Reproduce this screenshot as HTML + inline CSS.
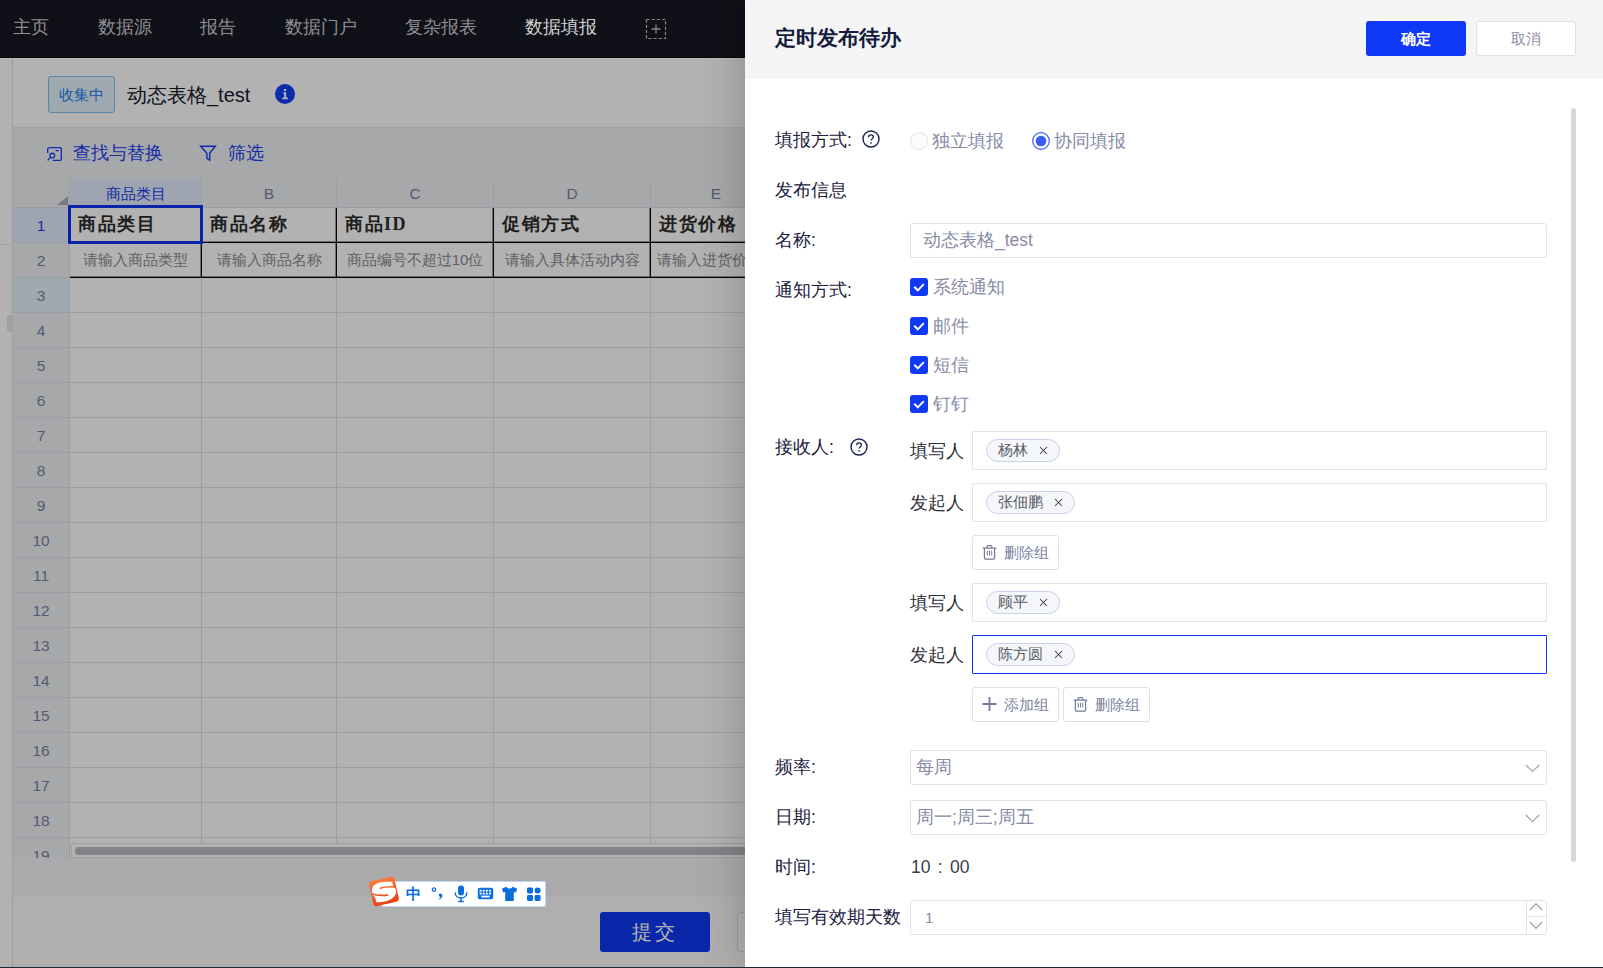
<!DOCTYPE html>
<html lang="zh">
<head>
<meta charset="utf-8">
<title>定时发布待办</title>
<style>
*{box-sizing:border-box;margin:0;padding:0}
html,body{width:1603px;height:968px;overflow:hidden;background:#fafafa;font-family:"Liberation Sans",sans-serif;}
.abs{position:absolute}
#page{position:absolute;left:0;top:0;width:1603px;height:968px;overflow:hidden;background:#fff}
/* nav */
#nav{position:absolute;left:0;top:0;width:1603px;height:58px;background:#101118;border-bottom:1px solid #06070c;box-shadow:0 1px 0 rgba(255,255,255,.14)}
#nav span{position:absolute;top:0;height:55px;line-height:55px;font-size:17.5px;color:#8f8f93;white-space:nowrap}
#nav span.on{color:#d2d2d2}
/* header */
#hdr{position:absolute;left:13px;top:58px;width:1590px;height:70px;background:#fff;border-bottom:1px solid #e6e7ee}
#vline{position:absolute;left:12px;top:58px;width:1px;height:910px;background:#e2e2e6}
#hline{position:absolute;left:0;top:244px;width:12px;height:1px;background:#ebebf2}
#handle{position:absolute;left:7px;top:315px;width:6px;height:17px;border-radius:3px 0 0 3px;background:#e6e6e6}
#badge{position:absolute;left:48px;top:76px;width:67px;height:37px;border:1px solid #7fc0f5;border-radius:3px;background:#e3f3fd;color:#2a7df0;font-size:15px;line-height:35px;text-align:center;white-space:nowrap}
#title{position:absolute;left:127px;top:80px;height:30px;line-height:30px;font-size:20px;color:#15192c;white-space:nowrap}
#info{position:absolute;left:275px;top:84px;width:20px;height:20px}
/* toolbar */
#tb{position:absolute;left:13px;top:128px;width:1590px;height:50px;background:#f0f1f4}
#tb .t{position:absolute;top:13px;height:25px;line-height:25px;font-size:17.5px;color:#1c3fee;white-space:nowrap}
/* sheet */
#sheet{position:absolute;left:13px;top:178px;width:1590px;height:680px;background:#fff;overflow:hidden}
#colh{position:absolute;left:0;top:0;width:1590px;height:30px;background:#f0f1f4;border-bottom:1px solid #e0e1ea}
#colh div{position:absolute;top:0;height:29px;line-height:31px;text-align:center;font-size:15.5px;color:#7a82a6;border-right:1px solid #e3e4ee}
#rowh{position:absolute;left:0;top:30px;width:57px;height:660px;background:#f0f1f4;border-right:1px solid #e0e1ea}
#rowh div{position:absolute;left:0;width:56px;height:35px;line-height:35px;text-align:center;font-size:15.5px;color:#7a82a6;border-bottom:1px solid #e1e2ec}
.vl{position:absolute;top:30px;width:1px;height:660px;background:#e1e2ea}
.hl{position:absolute;left:57px;width:1540px;height:1px;background:#e1e2ea}
.c1{position:absolute;top:30px;height:35px;line-height:33px;font-family:"Liberation Sans",sans-serif;font-weight:bold;font-size:18px;letter-spacing:1.5px;color:#2c2c2c;padding-left:8px;border-right:1px solid #0a0a0a;border-bottom:1px solid #000;box-shadow:inset -1px -1px 0 rgba(0,0,0,.38);white-space:nowrap;overflow:hidden}
.c2{position:absolute;top:65px;height:35px;line-height:33px;font-size:15px;color:#8b8b91;text-align:center;border-right:1px solid #0a0a0a;border-bottom:1px solid #000;box-shadow:inset -1px -1px 0 rgba(0,0,0,.38);white-space:nowrap;overflow:hidden}
#sel{position:absolute;left:55px;top:27px;width:135px;height:39px;border:3px solid #0c33f0}
#hsb{position:absolute;left:58px;top:665px;width:1540px;height:15px;background:#fff;border:1px solid #e2e3ec}
#hsb i{position:absolute;left:3px;top:3px;width:1500px;height:8px;border-radius:4px;background:#bbbcc0}
#below{position:absolute;left:13px;top:858px;width:1590px;height:39px;background:#f4f4f6}
#foot{position:absolute;left:13px;top:897px;width:1590px;height:71px;background:#fbfbfb}
#submit{position:absolute;left:600px;top:912px;width:110px;height:40px;border-radius:3px;background:#1139f3;color:#fff;font-family:"Liberation Sans",sans-serif;font-size:20px;letter-spacing:3px;text-align:center;line-height:40px;white-space:nowrap}
#btn2{position:absolute;left:737px;top:912px;width:110px;height:40px;border-radius:3px;background:#fff;border:1px solid #dcdfe6}
#mask{position:absolute;left:0;top:0;width:1603px;height:968px;background:rgba(0,0,0,.3)}
#botline{position:absolute;left:0;top:967px;width:1603px;height:1px;background:#1b2a38}

/* drawer */
#drawer{position:absolute;left:745px;top:0;width:858px;height:967px;background:#fff;box-shadow:-4px 0 40px rgba(0,0,0,.2)}
#dh{position:absolute;left:0;top:0;width:858px;height:78px;background:#f5f5f5;border-bottom:1px solid #efefef}
#dt{position:absolute;left:30px;top:23px;height:30px;line-height:30px;font-size:21px;font-weight:bold;color:#141b3d;white-space:nowrap}
#ok{position:absolute;left:621px;top:21px;width:100px;height:35px;border-radius:3px;background:#1039f7;color:#fff;font-size:15px;line-height:35px;text-align:center;font-weight:600}
#cancel{position:absolute;left:731px;top:21px;width:100px;height:35px;border-radius:3px;background:#fff;border:1px solid #dcdfe6;color:#8a8ea6;font-size:15px;line-height:33px;text-align:center}
#vsb{position:absolute;left:826px;top:108px;width:5px;height:754px;border-radius:3px;background:#d8d8d8}
.lb{position:absolute;left:30px;height:24px;line-height:24px;font-size:17.5px;color:#1b2140;white-space:nowrap}
.sub{position:absolute;left:165px;height:24px;line-height:24px;font-size:17.5px;color:#2e3038;white-space:nowrap}
.val{position:absolute;height:24px;line-height:24px;font-size:17.5px;color:#878ba6;white-space:nowrap}
.inp{position:absolute;left:165px;width:637px;height:35px;border:1px solid #e0e1ec;border-radius:3px;background:#fff}
.box{position:absolute;left:227px;width:575px;height:39px;border:1px solid #e0e1ec;border-radius:1px;background:#fff}
.box.focus{border:1.5px solid #1039f7}
.tag{position:absolute;left:13px;top:7px;height:23px;border:1px solid #c9d1ea;border-radius:12px;background:#f4f6fa;color:#585c66;font-size:15px;line-height:20px;padding:0 0 0 11px;white-space:nowrap}
.tag svg{position:absolute;right:11px;top:6px}
.gbtn{position:absolute;width:87px;height:35px;border:1px solid #dcdfe6;border-radius:3px;background:#fff;color:#7c81a0;font-size:15px;line-height:33px;white-space:nowrap}
.gbtn span{position:absolute;left:31px;top:0}
.gbtn svg{position:absolute;left:9px;top:8px}
.cb{position:absolute;left:165px;width:18px;height:18px;border-radius:3px;background:#1039f5}
.cb svg{position:absolute;left:0;top:0}
.help{position:absolute;width:18px;height:18px}

#ime{position:absolute;left:367px;top:876px;width:180px;height:32px}
#imebar{position:absolute;left:14px;top:5px;width:165px;height:26px;background:#fff;border:1px solid #bcd6f5;border-radius:2px}
#ime .zh{position:absolute;left:39px;top:8px;font-size:15px;line-height:20px;font-weight:bold;color:#0a6edb}
</style>
</head>
<body>
<div id="page">
  <div id="vline"></div><div id="hline"></div><div id="handle"></div>
  <div id="hdr"></div>
  <div id="badge">收集中</div>
  <div id="title">动态表格_test</div>
  <svg id="info" viewBox="0 0 20 20"><circle cx="10" cy="10" r="10" fill="#1340f5"/><rect x="8.900" y="5" width="2.200" height="2" fill="#fff"/><path d="M8.100 8.300h3v5.300h1.800v1.600H7.300v-1.600h1.800V9.800H8.100z" fill="#fff"/></svg>
  <div id="tb">
    <svg class="abs" style="left:33px;top:18px" width="17" height="17" viewBox="0 0 17 17" fill="none" stroke="#1c3fee" stroke-width="1.35"><path d="M1.7 7V3.100a1.500 1.500 0 0 1 1.500-1.500h10.600a1.500 1.500 0 0 1 1.500 1.500v9.800a1.500 1.500 0 0 1-1.500 1.500H6.800"/><circle cx="6.300" cy="9.500" r="2.300"/><path d="M4.600 11.200L1.600 14.400M9.600 4.600h3.200"/></svg>
    <div class="t" style="left:60px">查找与替换</div>
    <svg class="abs" style="left:186px;top:16px" width="18" height="18" viewBox="0 0 18 18" fill="none" stroke="#1c3fee" stroke-width="1.45" stroke-linejoin="miter"><path d="M1.700 2.200h14.600l-5.600 7v7l-2.800-1.800V9.200z"/></svg>
    <div class="t" style="left:215px">筛选</div>
  </div>
  <div id="sheet">
    <div id="colh">
      <div style="left:0;width:57px"><svg class="abs" style="left:44px;top:18px" width="11" height="9" viewBox="0 0 11 9"><path d="M11 0v9H0z" fill="#abaebe"/></svg></div>
      <div style="left:57px;width:132px;background:#e4ebfe;color:#1c3fee;font-size:15px">商品类目</div>
      <div style="left:189px;width:135px">B</div>
      <div style="left:324px;width:157px">C</div>
      <div style="left:481px;width:157px">D</div>
      <div style="left:638px;width:131px">E</div>
      <div style="left:769px;width:131px">F</div>
    </div>
    <div id="rowh">
      <div style="top:0;background:#e4ebfe;color:#1c3fee">1</div>
      <div style="top:35px">2</div>
      <div style="top:70px;background:#e4f4fb">3</div>
      <div style="top:105px">4</div>
      <div style="top:140px">5</div>
      <div style="top:175px">6</div>
      <div style="top:210px">7</div>
      <div style="top:245px">8</div>
      <div style="top:280px">9</div>
      <div style="top:315px">10</div>
      <div style="top:350px">11</div>
      <div style="top:385px">12</div>
      <div style="top:420px">13</div>
      <div style="top:455px">14</div>
      <div style="top:490px">15</div>
      <div style="top:525px">16</div>
      <div style="top:560px">17</div>
      <div style="top:595px">18</div>
      <div style="top:630px">19</div>
    </div>
    <div class="vl" style="left:188px"></div><div class="vl" style="left:323px"></div><div class="vl" style="left:480px"></div><div class="vl" style="left:637px"></div><div class="vl" style="left:768px"></div>
    <div class="hl" style="top:134px"></div><div class="hl" style="top:169px"></div><div class="hl" style="top:204px"></div><div class="hl" style="top:239px"></div><div class="hl" style="top:274px"></div><div class="hl" style="top:309px"></div><div class="hl" style="top:344px"></div><div class="hl" style="top:379px"></div><div class="hl" style="top:414px"></div><div class="hl" style="top:449px"></div><div class="hl" style="top:484px"></div><div class="hl" style="top:519px"></div><div class="hl" style="top:554px"></div><div class="hl" style="top:589px"></div><div class="hl" style="top:624px"></div><div class="hl" style="top:659px"></div>
    <div class="c1" style="left:57px;width:132px">商品类目</div>
    <div class="c1" style="left:189px;width:135px">商品名称</div>
    <div class="c1" style="left:324px;width:157px">商品<span style="font-family:'Liberation Serif',serif">ID</span></div>
    <div class="c1" style="left:481px;width:157px">促销方式</div>
    <div class="c1" style="left:638px;width:131px">进货价格</div>
    <div class="c2" style="left:57px;width:132px">请输入商品类型</div>
    <div class="c2" style="left:189px;width:135px">请输入商品名称</div>
    <div class="c2" style="left:324px;width:157px">商品编号不超过10位</div>
    <div class="c2" style="left:481px;width:157px">请输入具体活动内容</div>
    <div class="c2" style="left:638px;width:131px;text-align:left;padding-left:6px">请输入进货价格</div>
    <div id="sel"></div>
    <div id="hsb"><i></i></div>
  </div>
  <div id="below"></div>
  <div id="foot"></div>
  <div id="submit">提交</div>
  <div id="btn2"></div>
  <div id="mask"></div>
  <div id="nav">
    <span style="left:13px">主页</span>
    <span style="left:98px">数据源</span>
    <span style="left:200px">报告</span>
    <span style="left:285px">数据门户</span>
    <span style="left:405px">复杂报表</span>
    <span class="on" style="left:525px">数据填报</span>
    <svg class="abs" style="left:645px;top:18px" width="22" height="22" viewBox="0 0 22 22"><rect x="1.5" y="1.5" width="19" height="19" fill="none" stroke="#85868a" stroke-width="1.2" stroke-dasharray="3.2 2"/><path d="M6.5 11h9M11 6.5v9" stroke="#85868a" stroke-width="1.3" fill="none"/></svg>
  </div>
</div>

<div id="ime">
  <div id="imebar"></div>
  <svg class="abs" style="left:0;top:0" width="34" height="32" viewBox="0 0 34 32"><defs><linearGradient id="lg" x1="0" y1="0" x2="0.15" y2="1"><stop offset="0" stop-color="#f9803f"/><stop offset="1" stop-color="#ec4310"/></linearGradient></defs><rect x="-13" y="-12.800" width="26" height="25.600" rx="3.200" fill="url(#lg)" transform="translate(16.900 15.400) rotate(-13)"/><mask id="sm"><path d="M25.300 5.800L26.200 10.400C28.500 11.500 29.500 14.500 29 17C28.300 20.500 25 23.500 20 25C17 26 13 26.300 9.500 26.200L8 21.500C5.500 19.500 4.600 16.500 5 13C5.600 9.500 9 7 14 6.200C18 5.600 22 5.600 25.300 5.800Z" fill="#fff"/><path d="M13.400 12.200C17 10.800 22 10.500 29 10.900M3.500 17.500C9 19.400 16 19.600 20.600 19.100" fill="none" stroke="#000" stroke-width="1.700" stroke-linecap="round"/></mask><rect x="0" y="0" width="34" height="32" fill="#fff" mask="url(#sm)"/></svg>
  <div class="zh">中</div>
  <svg class="abs" style="left:64px;top:9px" width="14" height="16" viewBox="0 0 14 16"><circle cx="3" cy="4.600" r="1.700" fill="none" stroke="#0a6edb" stroke-width="1.300"/><path d="M9.200 8.600c1.400 0 2.200 1 2.200 2.200 0 1.800-1.400 3.200-3 3.800l-.4-.8c.9-.5 1.500-1.100 1.600-2-.9 0-1.700-.6-1.700-1.600s.6-1.600 1.300-1.600z" fill="#0a6edb"/></svg>
  <svg class="abs" style="left:87px;top:9px" width="14" height="18" viewBox="0 0 14 18"><rect x="4" y="0.500" width="6" height="10" rx="3" fill="#0a6edb"/><path d="M1.200 7.500c0 3.400 2.500 5.600 5.800 5.600s5.800-2.200 5.800-5.600" fill="none" stroke="#0a6edb" stroke-width="1.500"/><path d="M7 13v3M4.200 16.400h5.600" stroke="#0a6edb" stroke-width="1.500"/></svg>
  <svg class="abs" style="left:110px;top:11px" width="17" height="14" viewBox="0 0 17 14"><rect x="0.800" y="0.800" width="15.400" height="11.400" rx="1.800" fill="#0a6edb"/><g fill="#fff"><rect x="2.600" y="2.800" width="2" height="1.800"/><rect x="5.700" y="2.800" width="2" height="1.800"/><rect x="8.800" y="2.800" width="2" height="1.800"/><rect x="11.900" y="2.800" width="2" height="1.800"/><rect x="2.600" y="5.700" width="2" height="1.800"/><rect x="5.700" y="5.700" width="2" height="1.800"/><rect x="8.800" y="5.700" width="2" height="1.800"/><rect x="11.900" y="5.700" width="2" height="1.800"/><rect x="4.400" y="8.700" width="8.200" height="1.700"/></g></svg>
  <svg class="abs" style="left:134px;top:10px" width="17" height="16" viewBox="0 0 17 16"><path d="M5.400 0.800c.6 1.200 1.700 1.800 3.100 1.800s2.500-.6 3.100-1.800l4.600 2-1.500 3.700-1.900-.6v9H4.200v-9l-1.900.6L.8 2.800z" fill="#0a6edb"/></svg>
  <svg class="abs" style="left:160px;top:11px" width="14" height="14" viewBox="0 0 14 14" fill="#0a6edb"><rect x="0" y="0.500" width="6" height="6" rx="1.400"/><rect x="7.600" y="0.500" width="6" height="6" rx="3"/><rect x="0" y="8" width="6" height="6" rx="1.400"/><rect x="7.600" y="8" width="6" height="6" rx="1.400"/></svg>
</div>


<div id="drawer">
  <div id="dh">
    <div id="dt">定时发布待办</div>
    <div id="ok">确定</div>
    <div id="cancel">取消</div>
  </div>
  <div id="vsb"></div>
  <!-- row 1 -->
  <div class="lb" style="top:128px">填报方式:</div>
  <svg class="help" style="left:117px;top:130px" viewBox="0 0 18 18" fill="none" stroke="#1b2452" stroke-width="1.4"><circle cx="9" cy="9" r="8"/><path d="M6.6 7.2c0-1.5 1.1-2.4 2.4-2.4s2.4.9 2.4 2.2c0 1.6-2.3 1.8-2.3 3.6" stroke-width="1.3"/><circle cx="9.05" cy="12.9" r=".55" fill="#1b2452" stroke-width=".6"/></svg>
  <div class="abs" style="left:165px;top:132px;width:18px;height:18px;border:1px solid #e2e3ea;border-radius:50%;background:#fcfcfd"></div>
  <div class="val" style="left:187px;top:129px">独立填报</div>
  <svg class="abs" style="left:287px;top:132px" width="18" height="18" viewBox="0 0 18 18"><circle cx="9" cy="9" r="8.300" fill="#fff" stroke="#3a5cf6" stroke-width="1.200"/><circle cx="9" cy="9" r="5.300" fill="#3a5cf6"/></svg>
  <div class="val" style="left:309px;top:129px">协同填报</div>
  <div class="lb" style="top:178px">发布信息</div>
  <div class="lb" style="top:228px">名称:</div>
  <div class="inp" style="top:223px"></div>
  <div class="val" style="left:178px;top:228px">动态表格_test</div>
  <div class="lb" style="top:278px">通知方式:</div>
  <div class="cb" style="top:278px"><svg width="18" height="18" viewBox="0 0 18 18" fill="none" stroke="#fff" stroke-width="1.9"><path d="M4.2 8.8l3.6 3.5 6-6.2"/></svg></div><div class="val" style="left:188px;top:275px">系统通知</div>
  <div class="cb" style="top:317px"><svg width="18" height="18" viewBox="0 0 18 18" fill="none" stroke="#fff" stroke-width="1.9"><path d="M4.2 8.8l3.6 3.5 6-6.2"/></svg></div><div class="val" style="left:188px;top:314px">邮件</div>
  <div class="cb" style="top:356px"><svg width="18" height="18" viewBox="0 0 18 18" fill="none" stroke="#fff" stroke-width="1.9"><path d="M4.2 8.8l3.6 3.5 6-6.2"/></svg></div><div class="val" style="left:188px;top:353px">短信</div>
  <div class="cb" style="top:395px"><svg width="18" height="18" viewBox="0 0 18 18" fill="none" stroke="#fff" stroke-width="1.9"><path d="M4.2 8.8l3.6 3.5 6-6.2"/></svg></div><div class="val" style="left:188px;top:392px">钉钉</div>
  <div class="lb" style="top:435px">接收人:</div>
  <svg class="help" style="left:105px;top:438px" viewBox="0 0 18 18" fill="none" stroke="#1b2452" stroke-width="1.4"><circle cx="9" cy="9" r="8"/><path d="M6.6 7.2c0-1.5 1.1-2.4 2.4-2.4s2.4.9 2.4 2.2c0 1.6-2.3 1.8-2.3 3.6" stroke-width="1.3"/><circle cx="9.05" cy="12.9" r=".55" fill="#1b2452" stroke-width=".6"/></svg>
  <div class="sub" style="top:439px">填写人</div>
  <div class="box" style="top:431px"><div class="tag" style="width:74px">杨林<svg width="9" height="9" viewBox="0 0 9 9" stroke="#3c3f48" stroke-width="1.05" fill="none"><path d="M1 1l7 7M8 1L1 8"/></svg></div></div>
  <div class="sub" style="top:491px">发起人</div>
  <div class="box" style="top:483px"><div class="tag" style="width:89px">张佃鹏<svg width="9" height="9" viewBox="0 0 9 9" stroke="#3c3f48" stroke-width="1.05" fill="none"><path d="M1 1l7 7M8 1L1 8"/></svg></div></div>
  <div class="gbtn" style="left:227px;top:535px"><svg width="15" height="16" viewBox="0 0 15 16" fill="none" stroke="#747a9c" stroke-width="1.25"><path d="M0.700 4h13.600M4.900 3.800c0-1.400.5-2.100 1.400-2.100h2.400c.9 0 1.400.7 1.400 2.100M2.400 4.300v9.400c0 .9.500 1.400 1.300 1.400h7.600c.8 0 1.300-.5 1.300-1.400V4.300"/><path d="M5.300 6.800v4.800M7.500 6.800v4.800M9.700 6.800v4.800" stroke-width="1"/></svg><span>删除组</span></div>
  <div class="sub" style="top:591px">填写人</div>
  <div class="box" style="top:583px"><div class="tag" style="width:74px">顾平<svg width="9" height="9" viewBox="0 0 9 9" stroke="#3c3f48" stroke-width="1.05" fill="none"><path d="M1 1l7 7M8 1L1 8"/></svg></div></div>
  <div class="sub" style="top:643px">发起人</div>
  <div class="box focus" style="top:635px"><div class="tag" style="width:89px">陈方圆<svg width="9" height="9" viewBox="0 0 9 9" stroke="#3c3f48" stroke-width="1.05" fill="none"><path d="M1 1l7 7M8 1L1 8"/></svg></div></div>
  <div class="gbtn" style="left:227px;top:687px"><svg width="15" height="16" viewBox="0 0 15 16" fill="none" stroke="#747a9e" stroke-width="1.8"><path d="M0.5 8h14M7.5 1v14"/></svg><span>添加组</span></div>
  <div class="gbtn" style="left:318px;top:687px"><svg width="15" height="16" viewBox="0 0 15 16" fill="none" stroke="#747a9c" stroke-width="1.25"><path d="M0.700 4h13.600M4.900 3.800c0-1.400.5-2.100 1.400-2.100h2.400c.9 0 1.400.7 1.400 2.100M2.400 4.300v9.400c0 .9.500 1.400 1.300 1.400h7.600c.8 0 1.300-.5 1.300-1.400V4.300"/><path d="M5.300 6.800v4.800M7.500 6.800v4.800M9.700 6.800v4.800" stroke-width="1"/></svg><span>删除组</span></div>
  <div class="lb" style="top:755px">频率:</div>
  <div class="inp" style="top:750px"><svg class="abs" style="right:6px;top:13px" width="15" height="9" viewBox="0 0 15 9" fill="none" stroke="#9a9cb2" stroke-width="1.1"><path d="M0.8 1L7.5 7.6 14.2 1"/></svg></div>
  <div class="val" style="left:171px;top:755px">每周</div>
  <div class="lb" style="top:805px">日期:</div>
  <div class="inp" style="top:800px"><svg class="abs" style="right:6px;top:13px" width="15" height="9" viewBox="0 0 15 9" fill="none" stroke="#9a9cb2" stroke-width="1.1"><path d="M0.8 1L7.5 7.6 14.2 1"/></svg></div>
  <div class="val" style="left:171px;top:805px">周一;周三;周五</div>
  <div class="lb" style="top:855px">时间:</div>
  <div class="val" style="left:166px;top:855px;color:#3a3d48;word-spacing:2.5px">10 : 00</div>
  <div class="lb" style="top:905px">填写有效期天数</div>
  <div class="inp" style="top:900px"><div class="abs" style="right:19px;top:0;width:1px;height:33px;background:#e0e1ec"></div><div class="abs" style="right:0;top:15px;width:19px;height:1px;background:#e0e1ec"></div>
    <svg class="abs" style="right:3px;top:1px" width="14" height="9" viewBox="0 0 14 9" fill="none" stroke="#9a9cb2" stroke-width="1.1"><path d="M0.8 8L7 1.6 13.2 8"/></svg>
    <svg class="abs" style="right:3px;top:20px" width="14" height="9" viewBox="0 0 14 9" fill="none" stroke="#9a9cb2" stroke-width="1.1"><path d="M0.8 1L7 7.4 13.2 1"/></svg>
  </div>
  <div class="val" style="left:180px;top:906px;font-size:15px">1</div>
</div>

<div id="botline"></div>
</body>
</html>
